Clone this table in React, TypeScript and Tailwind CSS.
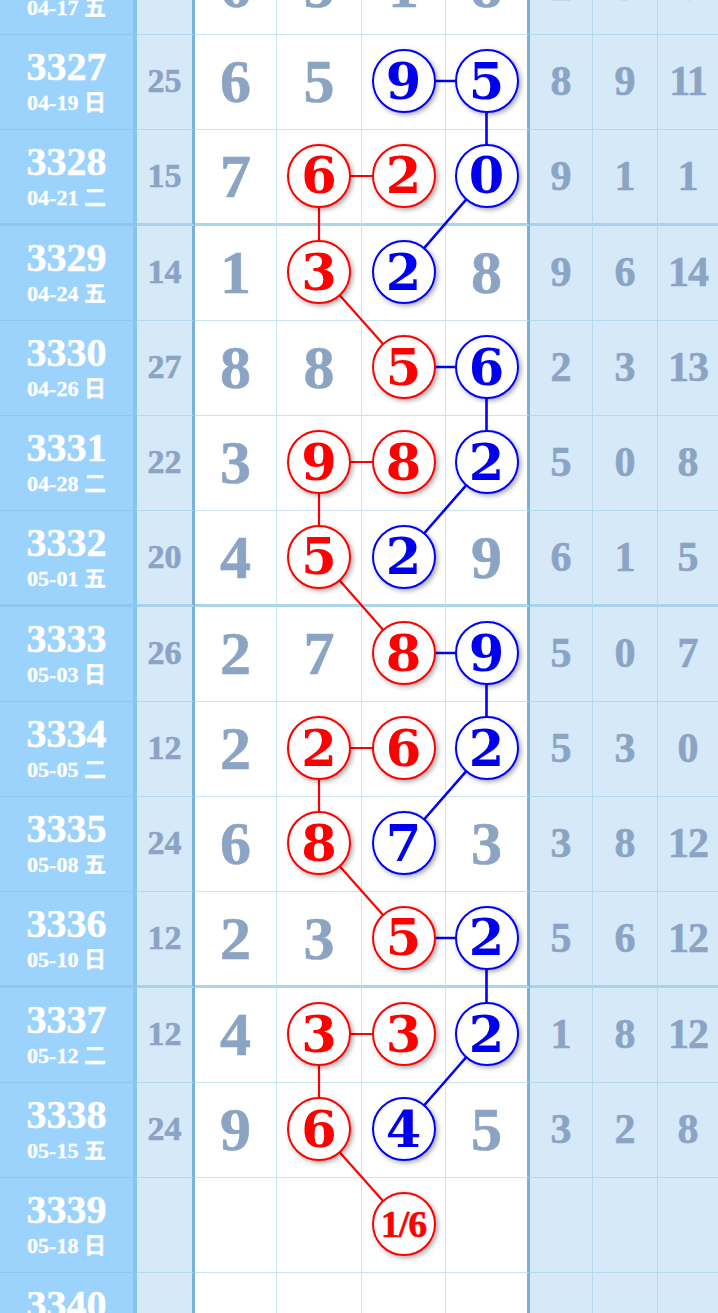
import React from "react";

type RowData = {
  id: string;
  date: string;
  s: string;
  cells: string[];
  right: string[];
  thick?: boolean;
};

const ROWS: RowData[] = [
  { id: "3326", date: "04-17 五", s: "19", cells: ["g6", "g5", "g1", "g8"], right: ["2", "3", "6"] },
  { id: "3327", date: "04-19 日", s: "25", cells: ["g6", "g5", "b9", "b5"], right: ["8", "9", "11"] },
  { id: "3328", date: "04-21 二", s: "15", cells: ["g7", "r6", "r2", "b0"], right: ["9", "1", "1"], thick: true },
  { id: "3329", date: "04-24 五", s: "14", cells: ["g1", "r3", "b2", "g8"], right: ["9", "6", "14"] },
  { id: "3330", date: "04-26 日", s: "27", cells: ["g8", "g8", "r5", "b6"], right: ["2", "3", "13"] },
  { id: "3331", date: "04-28 二", s: "22", cells: ["g3", "r9", "r8", "b2"], right: ["5", "0", "8"] },
  { id: "3332", date: "05-01 五", s: "20", cells: ["g4", "r5", "b2", "g9"], right: ["6", "1", "5"], thick: true },
  { id: "3333", date: "05-03 日", s: "26", cells: ["g2", "g7", "r8", "b9"], right: ["5", "0", "7"] },
  { id: "3334", date: "05-05 二", s: "12", cells: ["g2", "r2", "r6", "b2"], right: ["5", "3", "0"] },
  { id: "3335", date: "05-08 五", s: "24", cells: ["g6", "r8", "b7", "g3"], right: ["3", "8", "12"] },
  { id: "3336", date: "05-10 日", s: "12", cells: ["g2", "g3", "r5", "b2"], right: ["5", "6", "12"], thick: true },
  { id: "3337", date: "05-12 二", s: "12", cells: ["g4", "r3", "r3", "b2"], right: ["1", "8", "12"] },
  { id: "3338", date: "05-15 五", s: "24", cells: ["g9", "r6", "b4", "g5"], right: ["3", "2", "8"] },
  { id: "3339", date: "05-18 日", s: "", cells: ["", "", "r1/6", ""], right: ["", "", ""] },
  { id: "3340", date: "05-20 二", s: "", cells: ["", "", "", ""], right: ["", "", ""], thick: true },
];

const COL_X = [235.5, 319, 403.5, 486.5];

const tops: number[] = [];
{
  let y = 0;
  for (const r of ROWS) {
    tops.push(y);
    y += r.thick ? 96 : 95;
  }
}
const TOTAL = tops[tops.length - 1] + 96;

const idx = (id: string) => ROWS.findIndex((r) => r.id === id);
const pt = (id: string, col: number) => ({ x: COL_X[col - 3], y: tops[idx(id)] + 46 });

const LINES: { a: [string, number]; b: [string, number]; c: "r" | "b" }[] = [
  { a: ["3327", 5], b: ["3327", 6], c: "b" },
  { a: ["3327", 6], b: ["3328", 6], c: "b" },
  { a: ["3328", 6], b: ["3329", 5], c: "b" },
  { a: ["3330", 5], b: ["3330", 6], c: "b" },
  { a: ["3330", 6], b: ["3331", 6], c: "b" },
  { a: ["3331", 6], b: ["3332", 5], c: "b" },
  { a: ["3333", 5], b: ["3333", 6], c: "b" },
  { a: ["3333", 6], b: ["3334", 6], c: "b" },
  { a: ["3334", 6], b: ["3335", 5], c: "b" },
  { a: ["3336", 5], b: ["3336", 6], c: "b" },
  { a: ["3336", 6], b: ["3337", 6], c: "b" },
  { a: ["3337", 6], b: ["3338", 5], c: "b" },
  { a: ["3328", 4], b: ["3328", 5], c: "r" },
  { a: ["3328", 4], b: ["3329", 4], c: "r" },
  { a: ["3329", 4], b: ["3330", 5], c: "r" },
  { a: ["3331", 4], b: ["3331", 5], c: "r" },
  { a: ["3331", 4], b: ["3332", 4], c: "r" },
  { a: ["3332", 4], b: ["3333", 5], c: "r" },
  { a: ["3334", 4], b: ["3334", 5], c: "r" },
  { a: ["3334", 4], b: ["3335", 4], c: "r" },
  { a: ["3335", 4], b: ["3336", 5], c: "r" },
  { a: ["3337", 4], b: ["3337", 5], c: "r" },
  { a: ["3337", 4], b: ["3338", 4], c: "r" },
  { a: ["3338", 4], b: ["3339", 5], c: "r" },
];

function CellContent({ v }: { v: string }) {
  if (!v) return null;
  const tone = v[0];
  const text = v.slice(1);
  if (tone === "g") {
    return (
      <span className="text-[62px] leading-none font-bold text-[#8ba4c3] [-webkit-text-stroke:0.6px_#8ba4c3]">
        {text}
      </span>
    );
  }
  const small = text.length > 1;
  const ring =
    tone === "r"
      ? "border-[#ff0000] text-[#ff0000]"
      : "border-[#0000ff] text-[#0000ee]";
  return (
    <div
      className={`relative z-10 w-[64px] h-[64px] rounded-full bg-white border-[2.5px] ${ring} shadow-[2px_2px_5px_rgba(0,0,0,0.35)] flex items-center justify-center font-bold leading-none`}
    >
      {small ? (
        <span className="text-[38px] tracking-[-1px] [-webkit-text-stroke:0.5px_currentColor]">{text}</span>
      ) : (
        <span className="text-[51px] font-['DejaVu_Serif',serif]">{text}</span>
      )}
    </div>
  );
}

function Row({ r }: { r: RowData }) {
  const bb = r.thick ? "border-b-[3px]" : "border-b";
  const white = r.thick ? "border-b-[#add5ea]" : "border-b-[#c8e4f1]";
  const blue = r.thick ? "border-b-[#a9d2ea]" : "border-b-[#b4d8ee]";
  const base = "flex items-center justify-center pb-[2px]";
  const num = "leading-none font-bold text-[#8ba4c3] [-webkit-text-stroke:0.6px_#8ba4c3]";
  return (
    <div className={`flex ${r.thick ? "h-[96px]" : "h-[95px]"}`}>
      <div
        className={`w-[137px] shrink-0 bg-[#9bd3fd] border-r-4 border-r-[#87c5ef] ${bb} border-b-[#8ec8f1] flex flex-col items-center justify-center pb-[2px] text-white font-bold [-webkit-text-stroke:0.5px_white]`}
      >
        <div className="text-[40px] leading-[40px]">{r.id}</div>
        <div className="mt-[4px] text-[22px] leading-[24px] [-webkit-text-stroke:0.3px_white]">{r.date}</div>
      </div>
      <div
        className={`w-[58px] shrink-0 bg-[#d6e9f9] border-r-[3px] border-r-[#79b0d7] ${bb} ${blue} ${base} text-[34px] ${num}`}
      >
        {r.s}
      </div>
      <div className={`w-[82px] shrink-0 bg-white border-r border-r-[#cbe5f1] ${bb} ${white} ${base}`}>
        <CellContent v={r.cells[0]} />
      </div>
      <div className={`w-[85px] shrink-0 bg-white border-r border-r-[#cbe5f1] ${bb} ${white} ${base}`}>
        <CellContent v={r.cells[1]} />
      </div>
      <div className={`w-[84px] shrink-0 bg-white border-r border-r-[#cbe5f1] ${bb} ${white} ${base}`}>
        <CellContent v={r.cells[2]} />
      </div>
      <div className={`w-[84px] shrink-0 bg-white border-r-[3px] border-r-[#79b0d7] ${bb} ${white} ${base}`}>
        <CellContent v={r.cells[3]} />
      </div>
      <div
        className={`w-[63px] shrink-0 bg-[#d6e9f9] border-r border-r-[#b6d9ee] ${bb} ${blue} ${base} text-[42px] ${num}`}
      >
        {r.right[0]}
      </div>
      <div
        className={`w-[65px] shrink-0 bg-[#d6e9f9] border-r border-r-[#b6d9ee] ${bb} ${blue} ${base} text-[42px] ${num}`}
      >
        {r.right[1]}
      </div>
      <div
        className={`flex-1 bg-[#d6e9f9] ${bb} ${blue} ${base} text-[42px] ${num} ${
          r.right[2].length > 1 ? "tracking-[-1px]" : ""
        }`}
      >
        {r.right[2]}
      </div>
    </div>
  );
}

export default function App() {
  return (
    <div className="w-[718px] h-[1313px] overflow-hidden bg-white font-['Liberation_Serif','Noto_Sans_CJK_SC',serif]">
      <div className="relative -mt-[60px]">
        {ROWS.map((r) => (
          <Row key={r.id} r={r} />
        ))}
        <svg
          className="absolute left-0 top-0 pointer-events-none"
          width={718}
          height={TOTAL}
          viewBox={`0 0 718 ${TOTAL}`}
        >
          {LINES.map((l, i) => {
            const a = pt(l.a[0], l.a[1]);
            const b = pt(l.b[0], l.b[1]);
            return (
              <line
                key={i}
                x1={a.x}
                y1={a.y}
                x2={b.x}
                y2={b.y}
                stroke={l.c === "r" ? "#ff0000" : "#0000ff"}
                strokeWidth={l.c === "r" ? 2.2 : 2.6}
              />
            );
          })}
        </svg>
      </div>
    </div>
  );
}
